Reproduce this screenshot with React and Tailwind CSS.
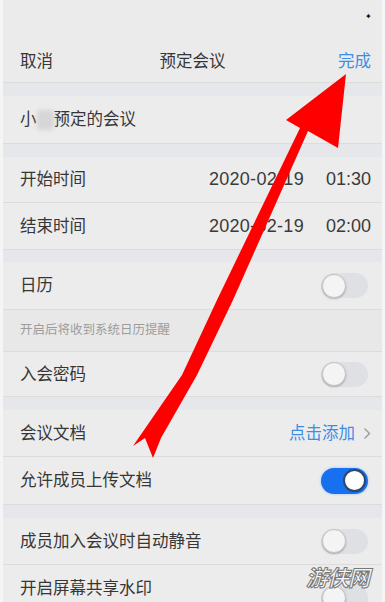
import React from 'react';

const font = { fontFamily: '"Liberation Sans", "Noto Sans CJK SC", sans-serif' };

function Toggle({ on }) {
  if (on) {
    return (
      <div className="w-[47px] h-[26px] rounded-full bg-[#1670ef] flex items-center justify-end pr-[2px] shadow-[0_0_3px_#9cc4f5]">
        <div className="w-[23px] h-[23px] rounded-full bg-white border-[2px] border-[#2e4766]" />
      </div>
    );
  }
  return (
    <div className="w-[47px] h-[25px] rounded-full bg-[#dfe0e3] flex items-center pl-[1px]">
      <div className="w-[24px] h-[24px] rounded-full bg-[#f4f4f4] border-[1.5px] border-[#c4c4c4] shadow-[0_1px_2px_rgba(0,0,0,0.25)]" />
    </div>
  );
}

function Row({ label, h = 'h-[47px]', children, last }) {
  return (
    <div className={`${h} flex items-center justify-between pl-[17px] pr-[11px] bg-[#ececec] ${last ? '' : 'border-b border-[#dcdcdc]'}`}>
      <span className="text-[16.5px] text-[#363636]">{label}</span>
      {children}
    </div>
  );
}

function Gap({ h = 'h-[13px]' }) {
  return <div className={`${h} bg-[#e5e7ea]`} />;
}

function DateTime({ date, time }) {
  return (
    <span className="text-[18px] text-[#3a3a3a] flex gap-[22px]">
      <span className="tracking-[0.3px]">{date}</span>
      <span>{time}</span>
    </span>
  );
}

export default function App() {
  return (
    <div className="w-[385px] h-[602px] overflow-hidden bg-[#f5f5f5] px-[3px] relative" style={font}>
      <div className="bg-[#ebebeb] h-full">
        {/* status bar */}
        <div className="h-[40px] relative">
          <span className="absolute left-[362px] top-[13px] text-[8px] text-black leading-none">✦</span>
        </div>
        {/* nav */}
        <div className="h-[43px] flex items-center justify-between pl-[17px] pr-[11px] border-b border-[#dcdcdc] relative">
          <span className="text-[16.5px] text-[#363636]">取消</span>
          <span className="absolute left-1/2 -translate-x-1/2 text-[16.5px] text-[#363636]">预定会议</span>
          <span className="text-[16.5px] text-[#3d8de6]">完成</span>
        </div>
        <Gap />
        <div className="h-[48px] flex items-center pl-[17px] bg-[#ececec] border-b border-[#dcdcdc]">
          <span className="text-[16.5px] text-[#363636]">小</span>
          <span className="w-[17px] h-[20px] bg-[#d6d6d6] rounded-[4px] blur-[2px]" />
          <span className="text-[16.5px] text-[#363636]">预定的会议</span>
        </div>
        <Gap />
        <Row label="开始时间" h="h-[46px]">
          <DateTime date="2020-02-19" time="01:30" />
        </Row>
        <Row label="结束时间" h="h-[47px]">
          <DateTime date="2020-02-19" time="02:00" />
        </Row>
        <Gap h="h-[12px]" />
        <Row label="日历" h="h-[48px]">
          <div className="mr-[3px]"><Toggle /></div>
        </Row>
        <div className="h-[42px] flex items-center pl-[17px] bg-[#e8e8e9] border-b border-[#dcdcdc]">
          <span className="text-[12.5px] text-[#9c9c9c]">开启后将收到系统日历提醒</span>
        </div>
        <Row label="入会密码" h="h-[45px]">
          <div className="mr-[3px]"><Toggle /></div>
        </Row>
        <Gap />
        <Row label="会议文档" h="h-[47px]">
          <span className="flex items-center gap-[8px]">
            <span className="text-[16.5px] text-[#3d8de6]">点击添加</span>
            <svg width="8" height="13" viewBox="0 0 8 13" fill="none">
              <path d="M1.5 1.5 L6.5 6.5 L1.5 11.5" stroke="#9a9a9a" strokeWidth="1.4" />
            </svg>
          </span>
        </Row>
        <Row label="允许成员上传文档" h="h-[48px]">
          <div className="mr-[3px]"><Toggle on /></div>
        </Row>
        <Gap />
        <Row label="成员加入会议时自动静音" h="h-[47px]">
          <div className="mr-[3px]"><Toggle /></div>
        </Row>
        <Row label="开启屏幕共享水印" h="h-[47px]" last>
          <div className="mr-[3px] mt-[18px]"><Toggle /></div>
        </Row>
      </div>

      {/* watermark */}
      <span className="absolute left-[306px] top-[560px] text-[22px] font-bold text-[#f6f6f6] tracking-[-1px] [-webkit-text-stroke:1px_#777] italic" style={{ fontFamily: '"Noto Sans CJK SC", sans-serif' }}>
        游侠网
      </span>

      {/* red annotation arrow */}
      <svg className="absolute left-0 top-0 pointer-events-none" width="385" height="602" viewBox="0 0 385 602">
        <polygon
          fill="#ff0000"
          points="346,74 338,148 308,131 233,300 197,375 161,438 153,458 145,438 133,446 182,375 217,300 300,128 286,120"
        />
      </svg>
    </div>
  );
}
